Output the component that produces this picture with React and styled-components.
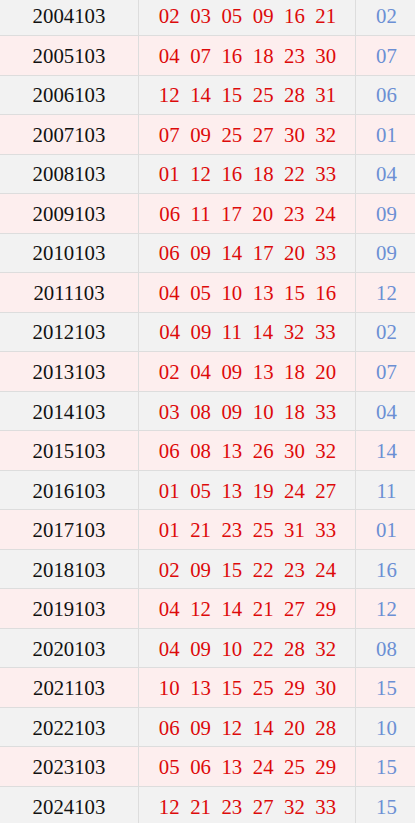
import React from "react";
import styled, { createGlobalStyle } from "styled-components";

const Global = createGlobalStyle`
  html, body { margin: 0; padding: 0; background: #fff; }
  body { font-family: "Liberation Serif", "Noto Sans CJK SC", serif; }
`;

const rows = [
  ["2004103", "02 03 05 09 16 21", "02"],
  ["2005103", "04 07 16 18 23 30", "07"],
  ["2006103", "12 14 15 25 28 31", "06"],
  ["2007103", "07 09 25 27 30 32", "01"],
  ["2008103", "01 12 16 18 22 33", "04"],
  ["2009103", "06 11 17 20 23 24", "09"],
  ["2010103", "06 09 14 17 20 33", "09"],
  ["2011103", "04 05 10 13 15 16", "12"],
  ["2012103", "04 09 11 14 32 33", "02"],
  ["2013103", "02 04 09 13 18 20", "07"],
  ["2014103", "03 08 09 10 18 33", "04"],
  ["2015103", "06 08 13 26 30 32", "14"],
  ["2016103", "01 05 13 19 24 27", "11"],
  ["2017103", "01 21 23 25 31 33", "01"],
  ["2018103", "02 09 15 22 23 24", "16"],
  ["2019103", "04 12 14 21 27 29", "12"],
  ["2020103", "04 09 10 22 28 32", "08"],
  ["2021103", "10 13 15 25 29 30", "15"],
  ["2022103", "06 09 12 14 20 28", "10"],
  ["2023103", "05 06 13 24 25 29", "15"],
  ["2024103", "12 21 23 27 32 33", "15"],
];

const Table = styled.div`
  margin-top: -3.5px;
  width: 415px;
  display: flex;
  flex-direction: column;
`;

const Row = styled.div`
  display: grid;
  grid-template-columns: 138px 1px 216px 1px 1fr;
  height: 38.53px;
  border-bottom: 1px solid #dddddd;
  background: ${(p) => (p.$pink ? "#fdeeee" : "#f2f2f2")};
  font-size: 20.8px;
  line-height: 1;
`;

const Sep = styled.div`
  background: #dddddd;
`;

const Cell = styled.div`
  display: flex;
  align-items: center;
  justify-content: center;
  color: ${(p) => p.$color || "#111"};
  padding-top: 2px;
`;

const Reds = styled(Cell)`
  gap: 10.5px;
  color: #dd0a0a;
  padding-left: 1px;
`;

const Blue = styled(Cell)`
  color: #6b8fd4;
  padding-left: 2px;
`;

export default function App() {
  return (
    <>
      <Global />
      <Table>
        {rows.map((r, i) => (
          <Row key={r[0]} $pink={i % 2 === 1}>
            <Cell>{r[0]}</Cell>
            <Sep />
            <Reds>
              {r[1].split(" ").map((n, j) => (
                <span key={j}>{n}</span>
              ))}
            </Reds>
            <Sep />
            <Blue>{r[2]}</Blue>
          </Row>
        ))}
      </Table>
    </>
  );
}
